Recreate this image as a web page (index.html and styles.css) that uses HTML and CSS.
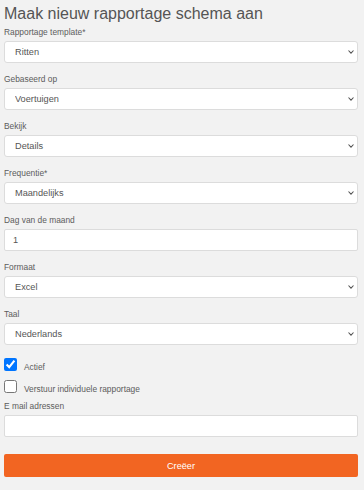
FILE: index.html
```html
<!DOCTYPE html>
<html lang="nl">
<head>
<meta charset="utf-8">
<title>Maak nieuw rapportage schema aan</title>
<link rel="stylesheet" href="styles.css">
</head>
<body>
<div class="page">
  <h1 class="title">Maak nieuw rapportage schema aan</h1>

  <div class="field">
    <label class="label">Rapportage template*</label>
    <div class="select-wrap">
      <select class="control select"><option>Ritten</option></select>
      <svg class="chev" width="6" height="4" viewBox="0 0 6 4"><path d="M0.5 0.5 L3 3.2 L5.5 0.5" fill="none" stroke="#555" stroke-width="1.1"/></svg>
    </div>
  </div>

  <div class="field">
    <label class="label">Gebaseerd op</label>
    <div class="select-wrap">
      <select class="control select"><option>Voertuigen</option></select>
      <svg class="chev" width="6" height="4" viewBox="0 0 6 4"><path d="M0.5 0.5 L3 3.2 L5.5 0.5" fill="none" stroke="#555" stroke-width="1.1"/></svg>
    </div>
  </div>

  <div class="field">
    <label class="label">Bekijk</label>
    <div class="select-wrap">
      <select class="control select"><option>Details</option></select>
      <svg class="chev" width="6" height="4" viewBox="0 0 6 4"><path d="M0.5 0.5 L3 3.2 L5.5 0.5" fill="none" stroke="#555" stroke-width="1.1"/></svg>
    </div>
  </div>

  <div class="field">
    <label class="label">Frequentie*</label>
    <div class="select-wrap">
      <select class="control select"><option>Maandelijks</option></select>
      <svg class="chev" width="6" height="4" viewBox="0 0 6 4"><path d="M0.5 0.5 L3 3.2 L5.5 0.5" fill="none" stroke="#555" stroke-width="1.1"/></svg>
    </div>
  </div>

  <div class="field">
    <label class="label">Dag van de maand</label>
    <input class="control input" type="text" value="1">
  </div>

  <div class="field">
    <label class="label">Formaat</label>
    <div class="select-wrap">
      <select class="control select"><option>Excel</option></select>
      <svg class="chev" width="6" height="4" viewBox="0 0 6 4"><path d="M0.5 0.5 L3 3.2 L5.5 0.5" fill="none" stroke="#555" stroke-width="1.1"/></svg>
    </div>
  </div>

  <div class="field">
    <label class="label">Taal</label>
    <div class="select-wrap">
      <select class="control select"><option>Nederlands</option></select>
      <svg class="chev" width="6" height="4" viewBox="0 0 6 4"><path d="M0.5 0.5 L3 3.2 L5.5 0.5" fill="none" stroke="#555" stroke-width="1.1"/></svg>
    </div>
  </div>

  <div class="checks">
    <label class="check-row"><input class="check" type="checkbox" checked><span class="check-text">Actief</span></label>
    <label class="check-row"><input class="check" type="checkbox"><span class="check-text">Verstuur individuele rapportage</span></label>
  </div>

  <div class="field email">
    <label class="label">E mail adressen</label>
    <input class="control input" type="text" value="">
  </div>

  <button class="submit" type="button">Creëer</button>
</div>
</body>
</html>
```

FILE: styles.css
```css
html, body {
  margin: 0;
  padding: 0;
  background: #f2f2f2;
}

body {
  font-family: "Liberation Sans", Arial, sans-serif;
  color: #555;
}

.page {
  width: 354px;
  padding: 3px 6px 0 4px;
  display: flex;
  flex-direction: column;
}

.title {
  margin: 0 0 1px 0;
  font-size: 16px;
  font-weight: normal;
  line-height: 22px;
  color: #555;
}

.field {
  display: flex;
  flex-direction: column;
  margin-bottom: 10px;
}

.label {
  font-size: 8.4px;
  line-height: 12px;
  margin-bottom: 3px;
  color: #5c5c5c;
}

.select-wrap {
  position: relative;
}

.control {
  box-sizing: border-box;
  width: 354px;
  height: 22px;
  margin: 0;
  border: 1px solid #dcdcdc;
  border-radius: 3px;
  background: #fff;
  font-family: "Liberation Sans", Arial, sans-serif;
  font-size: 9.2px;
  color: #555;
  outline: none;
}

.select {
  appearance: none;
  -webkit-appearance: none;
  padding: 0 16px 0 10px;
}

.input {
  padding: 0 8px;
  border-radius: 2px;
}

.chev {
  position: absolute;
  right: 4px;
  top: 9px;
  pointer-events: none;
}

.checks {
  display: flex;
  flex-direction: column;
  gap: 9px;
  margin-top: 3px;
  margin-bottom: 7px;
}

.check-row {
  display: flex;
  align-items: center;
  gap: 7px;
  height: 13px;
}

.check {
  width: 13px;
  height: 13px;
  margin: 0;
}

.check-text {
  font-size: 8.4px;
  line-height: 12px;
  padding-top: 4px;
  color: #5c5c5c;
}

.email {
  margin-bottom: 17px;
}

.submit {
  width: 354px;
  height: 23px;
  border: none;
  border-radius: 2px;
  background: #f26522;
  color: #fff;
  font-family: "Liberation Sans", Arial, sans-serif;
  font-size: 9.2px;
  padding: 0;
}
```
